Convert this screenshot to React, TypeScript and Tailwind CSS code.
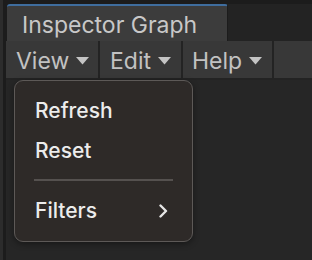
import React from "react";

function Tri() {
  return (
    <svg width="13" height="8" viewBox="0 0 13 8" className="ml-[7px] mb-[1px]">
      <path d="M0 0 H13 L6.5 7.5 Z" fill="#c4c4c4" />
    </svg>
  );
}

export default function App() {
  return (
    <div
      className="relative w-[312px] h-[260px] overflow-hidden bg-[#262626] flex"
      style={{ fontFamily: "Inter, 'Noto Sans', sans-serif" }}
    >
      <div className="w-[3px] h-full bg-[#2c2c2c]" />
      <div className="w-[3px] h-full bg-[#1c1c1c]" />
      <div className="flex-1 flex flex-col">
        {/* tab strip */}
        <div className="h-[41px] bg-[#1c1c1c] flex items-end">
          <div className="ml-[1px] w-[221px] h-[37px] bg-[#3c3c3c] rounded-t-[3px] border-t-2 border-[#3f6d9e] border-r border-r-[#1c1c1c] flex items-center pl-[15px] text-[23px] text-[#c8c8c8] leading-none pt-[3px]">
            Inspector Graph
          </div>
          <div className="flex-1 h-[37px] bg-[#232323]" />
        </div>
        {/* toolbar */}
        <div className="h-[39px] bg-[#383838] border-b-2 border-[#232323] flex text-[23px] text-[#c2c2c2] leading-none">
          <div className="w-[94px] flex items-center pl-[10px] pt-[4px] border-r-2 border-[#232323]">
            View<Tri />
          </div>
          <div className="w-[83px] flex items-center pl-[10px] pt-[4px] border-r-2 border-[#232323]">
            Edit<Tri />
          </div>
          <div className="w-[91px] flex items-center pl-[9px] pt-[4px] border-r-2 border-[#232323]">
            Help<Tri />
          </div>
          <div className="flex-1" />
        </div>
        <div className="flex-1" />
      </div>

      {/* dropdown menu */}
      <div className="absolute left-[14px] top-[80px] w-[179px] h-[162px] rounded-[9px] border border-[#5d5957] bg-[#2e2a28] shadow-[0_2px_6px_rgba(0,0,0,0.4)] flex flex-col pt-[10px] text-[21px] font-medium text-[#ececec]">
        <div className="h-[40px] leading-[40px] pl-[20px]">Refresh</div>
        <div className="h-[40px] leading-[40px] pl-[20px]">Reset</div>
        <div className="mt-[8px] mx-[19px] h-[2px] bg-[#55514f]" />
        <div className="mt-[10px] h-[40px] leading-[40px] pl-[20px] pr-[24px] flex items-center justify-between">
          <span>Filters</span>
          <svg width="9" height="14" viewBox="0 0 9 14">
            <path d="M1.5 1.5 L7 7 L1.5 12.5" fill="none" stroke="#e6e6e6" strokeWidth="2.4" strokeLinecap="round" strokeLinejoin="round" />
          </svg>
        </div>
      </div>
    </div>
  );
}
